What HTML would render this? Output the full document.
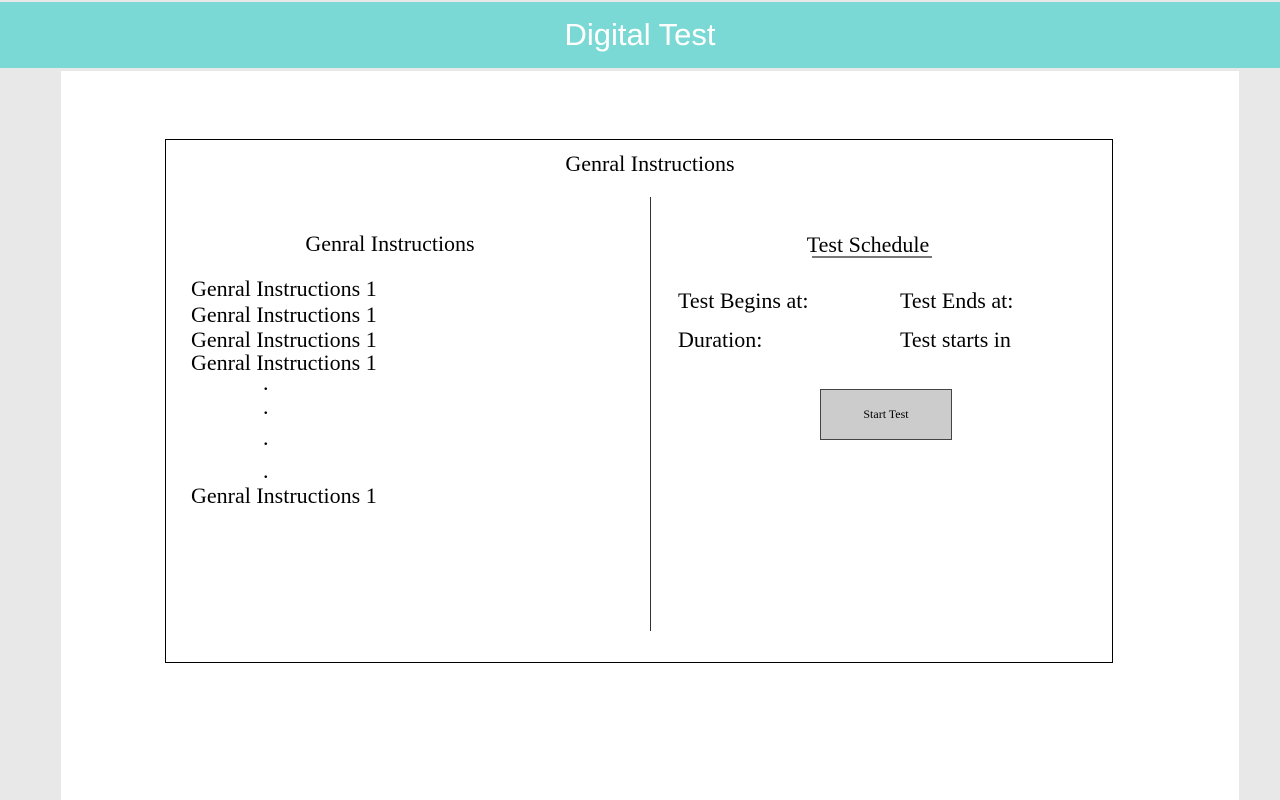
<!DOCTYPE html>
<html><head><style>
body{margin:0;width:1280px;height:800px;background:#e8e8e8;position:relative;overflow:hidden;font-family:"Liberation Serif",serif;}
.hd{position:absolute;left:0;top:2px;width:1280px;height:66px;background:#7ad9d5;}
.hd div{position:absolute;width:100%;text-align:center;top:14px;font:31px "Liberation Sans",sans-serif;color:#fff;line-height:38px;}
.pn{position:absolute;left:61px;top:71px;width:1178px;height:729px;background:#fff;}
.bx{position:absolute;left:165px;top:139px;width:946px;height:522px;border:1px solid #000;}
.t{position:absolute;font-size:22px;line-height:22px;white-space:nowrap;color:#000;}
.c{transform:translateX(-50%);}
.vl{position:absolute;left:650px;top:197px;width:1px;height:434px;background:#333;}
.btn{position:absolute;left:820px;top:389px;width:130px;height:49px;background:#ccc;border:1px solid #444;font-size:12px;text-align:center;line-height:49px;}
</style></head><body>
<div class="hd"><div>Digital Test</div></div>
<div class="pn"></div>
<div class="bx"></div>
<div class="t c" style="left:650px;top:153px">Genral Instructions</div>
<div class="vl"></div>
<div class="t c" style="left:390px;top:233px">Genral Instructions</div>
<div class="t" style="left:191px;top:278px">Genral Instructions 1</div>
<div class="t" style="left:191px;top:304px">Genral Instructions 1</div>
<div class="t" style="left:191px;top:329px">Genral Instructions 1</div>
<div class="t" style="left:191px;top:352px">Genral Instructions 1</div>
<div class="t" style="left:263px;top:372px">.</div>
<div class="t" style="left:263px;top:396px">.</div>
<div class="t" style="left:263px;top:427px">.</div>
<div class="t" style="left:263px;top:460px">.</div>
<div class="t" style="left:191px;top:485px">Genral Instructions 1</div>
<div class="t c" style="left:868px;top:234px">Test Schedule</div>
<div style="position:absolute;left:812px;top:256px;width:120px;height:2px;background:#777"></div>
<div class="t" style="left:678px;top:290px">Test Begins at:</div>
<div class="t" style="left:900px;top:290px">Test Ends at:</div>
<div class="t" style="left:678px;top:329px">Duration:</div>
<div class="t" style="left:900px;top:329px">Test starts in</div>
<div class="btn">Start Test</div>
</body></html>
